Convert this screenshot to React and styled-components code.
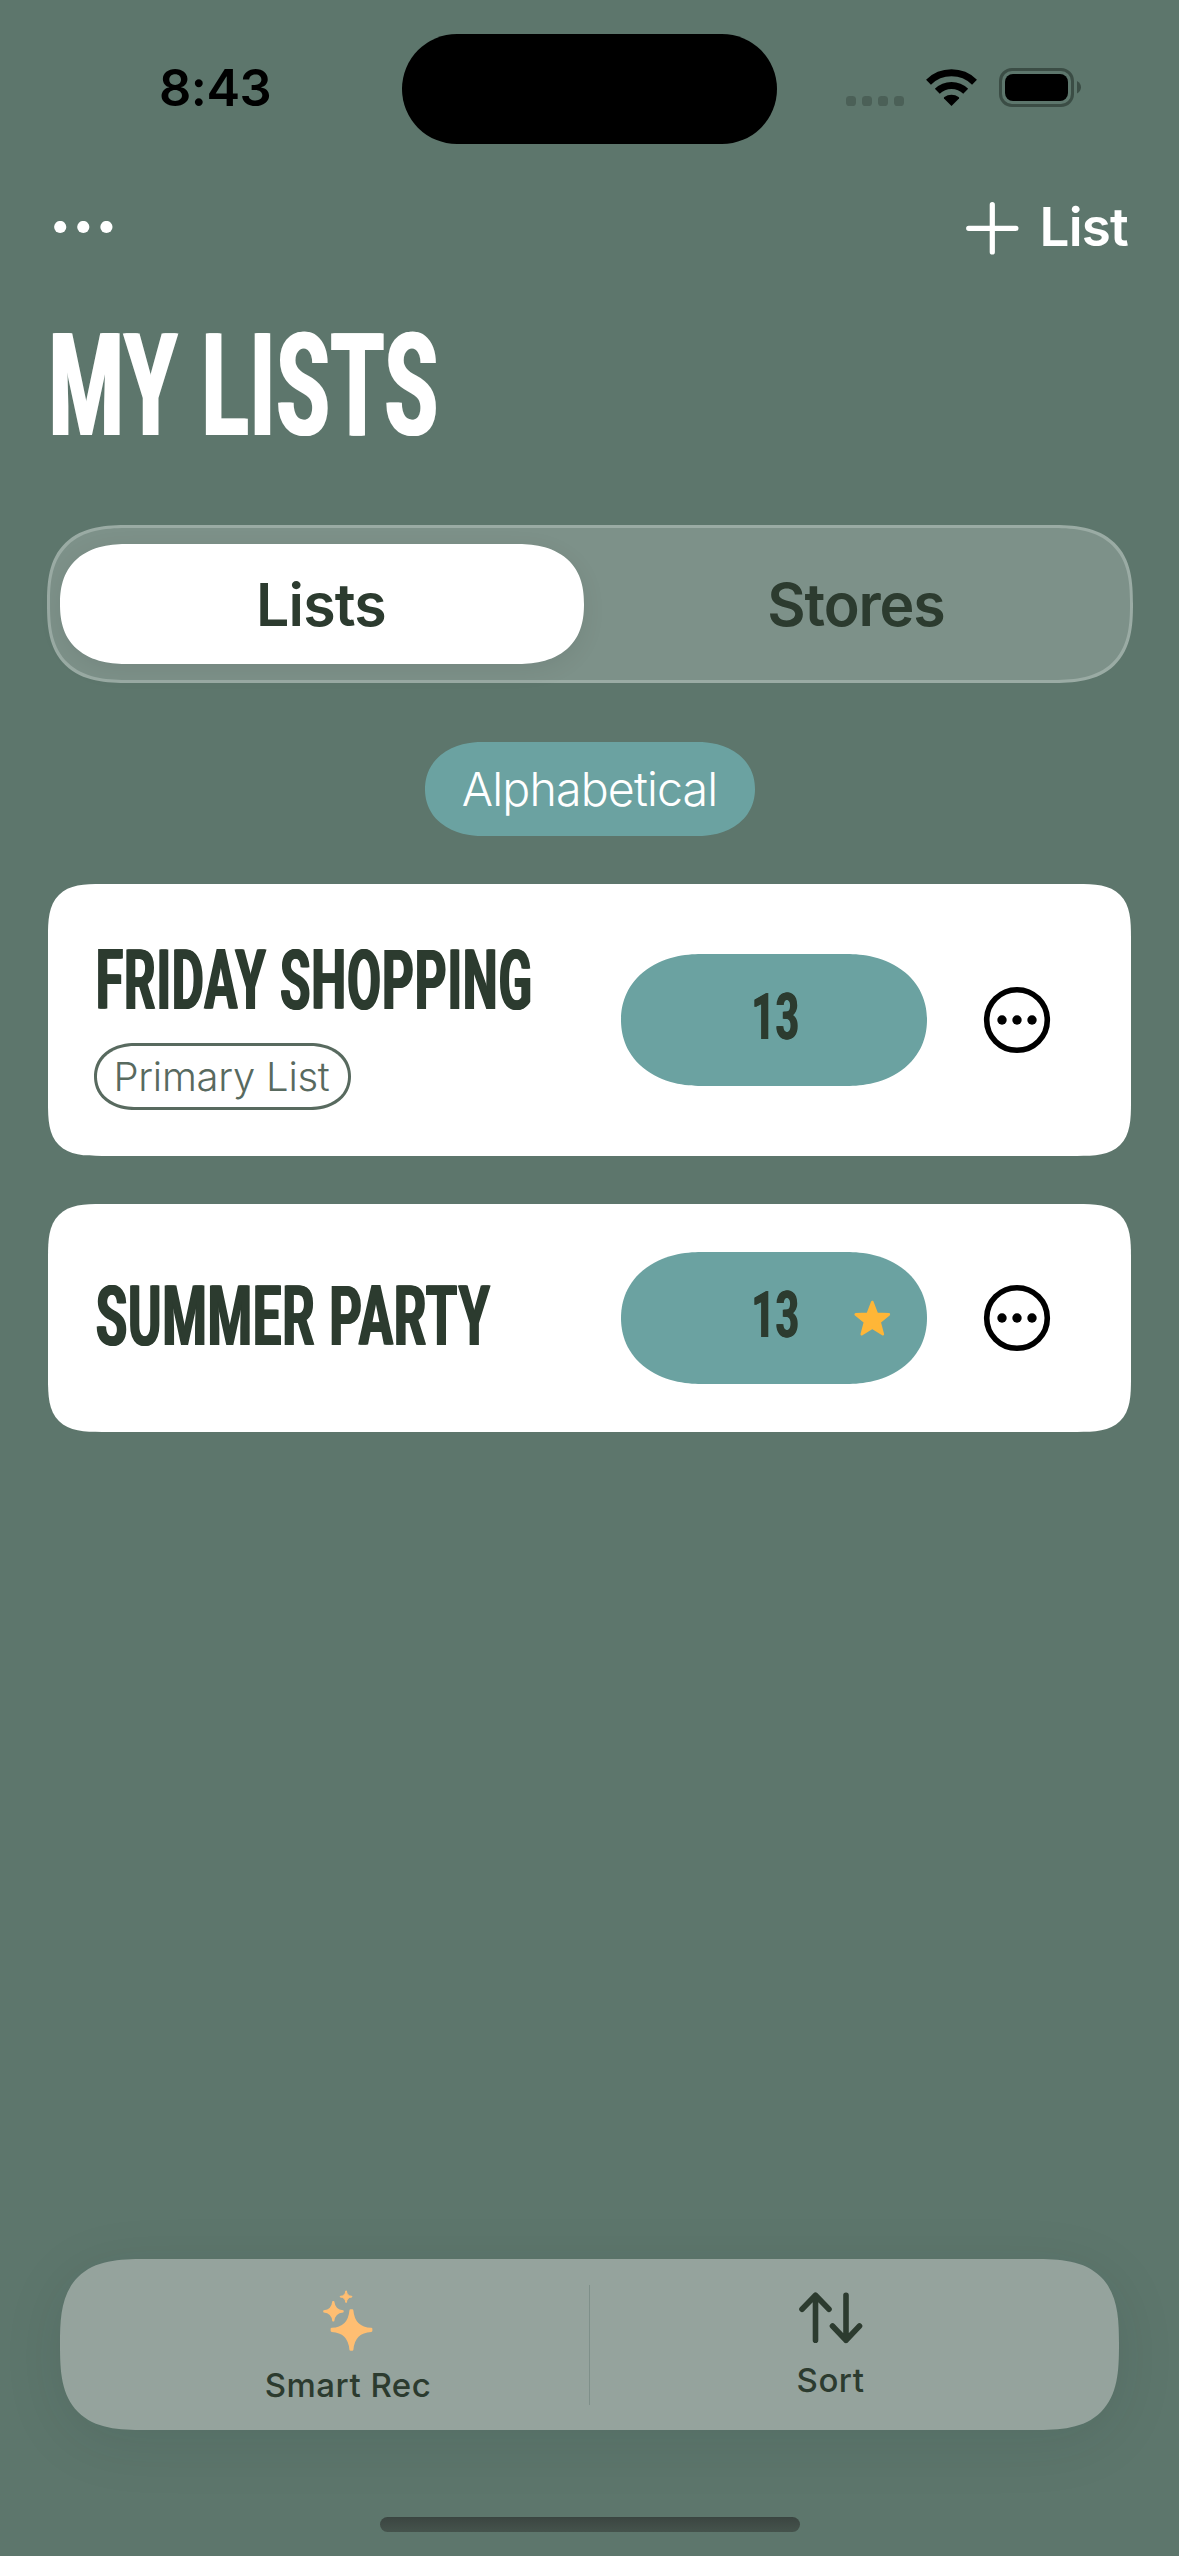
import React from "react";
import styled, { createGlobalStyle } from "styled-components";

const color = {
  page: "#5d766c",
  ink: "#2c3b2f",
  teal: "#6ba2a1",
  outline: "#586a5f",
  bar: "#95a39d",
};

const GlobalStyle = createGlobalStyle`
  *, *::before, *::after { box-sizing: border-box; }
  body { margin: 0; background: ${color.page}; }
  button { margin: 0; padding: 0; border: 0; background: none; color: inherit; font: inherit; }
`;

const Screen = styled.div`
  display: flex;
  flex-direction: column;
  width: 1179px;
  height: 2556px;
  overflow: hidden;
  background: ${color.page};
  color: ${color.ink};
  font-family: Inter, "Liberation Sans", sans-serif;
`;

/* Tall, narrow capitals for titles and numerals; the side shadows thicken the upright strokes */
const Condensed = styled.span`
  display: block;
  width: max-content;
  font-family: Roboto, "Liberation Sans", sans-serif;
  font-weight: 700;
  font-size: ${(p) => p.$size}px;
  line-height: 1;
  letter-spacing: 0.022em;
  white-space: nowrap;
  text-transform: uppercase;
  text-shadow: 0.018em 0 currentColor, -0.018em 0 currentColor;
  transform: scaleX(${(p) => p.$squeeze});
  transform-origin: ${(p) => p.$origin || "left"} center;
`;

const StatusBar = styled.header`
  display: grid;
  grid-template-columns: 402px 375px 402px;
  height: 178px;
  padding-top: 34px;
`;

const Clock = styled.time`
  padding: 28px 0 0 159px;
  color: #000;
  font-size: 50.5px;
  font-weight: 600;
  line-height: 51px;
  letter-spacing: -0.5px;
`;

const Island = styled.div`
  height: 110px;
  border-radius: 55px;
  background: #000;
`;

const StatusIcons = styled.div`
  display: flex;
  align-items: flex-start;
  padding: 34px 0 0 69px;
`;

const NavBar = styled.nav`
  display: flex;
  align-items: center;
  justify-content: space-between;
  height: 100px;
  padding: 0 51px 0 54px;
  color: #fff;
`;

const NavButton = styled.button`
  display: flex;
  align-items: center;
  gap: 21px;
  font-size: 53px;
  font-weight: 600;
  line-height: 60px;
`;

const NavLabel = styled.span`
  padding-bottom: 2px;
  letter-spacing: -0.8px;
`;

const PageTitle = styled.h1`
  height: 247px;
  margin: 0;
  padding: 38px 0 0 49px;
  color: #fff;
`;

const Segments = styled.div`
  display: flex;
  align-items: center;
  width: 1086px;
  height: 158px;
  margin: 0 auto;
  padding: 0 10px;
  border: 3px solid #9aaba4;
  border-radius: 64px;
  background: #7d9189;
  @supports (corner-shape: squircle) {
    border-radius: 82px / 79px;
    corner-shape: superellipse(1.44);
  }
`;

const Segment = styled.button`
  width: 524px;
  height: 120px;
  margin-left: ${(p) => (p.$active ? 0 : 11)}px;
  padding-right: 1px;
  border-radius: 54px;
  background: ${(p) => (p.$active ? "#fff" : "transparent")};
  box-shadow: ${(p) => (p.$active ? "0 6px 24px rgba(0, 0, 0, 0.07)" : "none")};
  font-size: 59px;
  font-weight: 600;
  letter-spacing: ${(p) => p.$spacing}px;
  @supports (corner-shape: squircle) {
    border-radius: 68px / 60px;
    corner-shape: superellipse(1.27);
  }
`;

const SortBadge = styled.div`
  display: flex;
  align-items: center;
  justify-content: center;
  width: 330px;
  height: 94px;
  margin: 59px auto 48px;
  border-radius: 47px;
  background: ${color.teal};
  color: #fff;
  font-size: 46.5px;
  font-weight: 300;
  letter-spacing: -0.85px;
  @supports (corner-shape: squircle) {
    border-radius: 57px / 47px;
    corner-shape: superellipse(1.1);
  }
`;

const Lists = styled.main`
  display: flex;
  flex-direction: column;
  gap: 48px;
  padding: 0 48px;
`;

const Card = styled.article`
  display: flex;
  align-items: center;
  height: ${(p) => p.$height}px;
  padding-left: 48px;
  border-radius: 37px;
  background: #fff;
  @supports (corner-shape: squircle) {
    border-radius: 54px;
    corner-shape: superellipse(1.62);
  }
`;

const CardText = styled.div`
  display: flex;
  flex-direction: column;
  align-items: flex-start;
  width: 525px;
  gap: 28px;
`;

const CardTitle = styled.h2`
  width: 525px;
  height: 84px;
  margin: 0;
  padding: ${(p) => p.$drop}px 0 0;
`;

const PrimaryTag = styled.span`
  display: flex;
  align-items: center;
  justify-content: center;
  width: 257px;
  height: 67px;
  margin-left: -2px;
  padding-right: 2px;
  border: 3px solid ${color.outline};
  border-radius: 34px;
  color: ${color.outline};
  font-size: 40px;
  font-weight: 300;
  letter-spacing: -0.25px;
  @supports (corner-shape: squircle) {
    border-radius: 41px / 33.5px;
    corner-shape: superellipse(1.1);
  }
`;

const Count = styled.div`
  display: grid;
  grid-template-columns: 1fr auto 1fr;
  align-items: center;
  width: 306px;
  height: 132px;
  padding: 0 35px 0 37px;
  border-radius: 66px;
  background: ${color.teal};
  @supports (corner-shape: squircle) {
    border-radius: 80px / 66px;
    corner-shape: superellipse(1.1);
  }
`;

const CountValue = styled.div`
  grid-column: 2;
  padding: 0 0 5px 2px;
`;

const CountStar = styled.div`
  display: flex;
  justify-content: flex-end;
  padding: 1px 1px 0 0;
`;

const MoreButton = styled.button`
  display: flex;
  margin-left: 56px;
`;

const Toolbar = styled.footer`
  display: grid;
  grid-template-columns: 529px 1px 529px;
  align-items: center;
  width: 1059px;
  height: 171px;
  margin: auto auto 87px;
  border-radius: 62px;
  background: ${color.bar};
  box-shadow: 0 12px 60px rgba(0, 40, 40, 0.1);
  @supports (corner-shape: squircle) {
    border-radius: 85px;
    corner-shape: superellipse(1.54);
  }
`;

const ToolButton = styled.button`
  display: flex;
  flex-direction: column;
  align-items: center;
  gap: ${(p) => p.$gap}px;
  padding: ${(p) => p.$pad};
  font-size: 33px;
  font-weight: 500;
  line-height: 40px;
  letter-spacing: 0.5px;
`;

const Divider = styled.div`
  height: 120px;
  background: #7f908a;
`;

const HomeIndicator = styled.div`
  flex: none;
  width: 420px;
  height: 15px;
  margin: 0 auto 24px;
  border-radius: 8px;
  background: linear-gradient(#3b4541, #45534c);
`;

const Signal = () => (
  <svg width="58" height="40" viewBox="0 0 58 40" fill="#4b6057">
    {[0, 16, 32, 48].map((x) => (
      <rect key={x} x={x} y="28" width="10" height="10" rx="3.6" />
    ))}
  </svg>
);

const WifiIcon = styled.svg`
  margin-left: 22px;
`;

const Wifi = () => (
  <WifiIcon width="51" height="40" viewBox="0 0 51 40">
    <g fill="none" stroke="#000" strokeWidth="7">
      <path d="M2.5 14.2 A33 33 0 0 1 48.5 14.2" />
      <path d="M11.3 23.3 A20.3 20.3 0 0 1 39.7 23.3" />
    </g>
    <path d="M25.5 38 L18 30.6 Q17.5 29.8 18.4 29.1 A11.6 11.6 0 0 1 32.6 29.1 Q33.5 29.8 33 30.6 Z" fill="#000" />
  </WifiIcon>
);

const BatteryIcon = styled.svg`
  margin-left: 22px;
`;

const Battery = () => (
  <BatteryIcon width="83" height="40" viewBox="0 0 83 40">
    <rect x="1.5" y="1.5" width="72" height="36" rx="11.5" fill="none" stroke="#3b4d45" strokeWidth="3" />
    <rect x="6" y="6" width="63" height="27" rx="8" fill="#000" />
    <path d="M78 13 Q82 15.4 82 19.3 Q82 23.2 78 25.6 Z" fill="#3b4d45" />
  </BatteryIcon>
);

const Ellipsis = () => (
  <svg width="60" height="14" viewBox="0 0 60 14" fill="#fff">
    <circle cx="6.2" cy="6" r="6.1" />
    <circle cx="29.3" cy="6" r="6.1" />
    <circle cx="52.4" cy="6" r="6.1" />
  </svg>
);

const Plus = () => (
  <svg width="53" height="53" viewBox="0 0 53 53" stroke="#fff" strokeWidth="5.2" strokeLinecap="round">
    <path d="M26.3 2.7 V49.9 M2.7 26.3 H49.9" />
  </svg>
);

const MoreCircle = () => (
  <svg width="68" height="68" viewBox="0 0 68 68">
    <circle cx="34" cy="34" r="30.3" fill="none" stroke="#000" strokeWidth="5.6" />
    <circle cx="19" cy="34" r="4.7" />
    <circle cx="34" cy="34" r="4.7" />
    <circle cx="49" cy="34" r="4.7" />
  </svg>
);

const Star = () => (
  <svg width="37" height="37" viewBox="0 0 37 37">
    <path
      d="M18.3 2 L22.8 13.7 L34.8 14.4 L25.6 22.1 L28.8 34.2 L18.3 27.6 L7.8 34.2 L11 22.1 L1.8 14.4 L13.8 13.7 Z"
      fill="#ffb637"
      stroke="#ffb637"
      strokeWidth="2.6"
      strokeLinejoin="round"
    />
  </svg>
);

const Sparkles = () => (
  <svg width="50" height="62" viewBox="0 0 50 62" fill="#ffbe72" stroke="#ffbe72" strokeLinejoin="round">
    <path strokeWidth="2.4" d="M27.6 20.5 H29.2 Q30.7 38.2 48.2 39 V40.8 Q30.7 41.6 29.2 59.6 H27.6 Q26.1 41.6 8.8 40.8 V39 Q26.1 38.2 27.6 20.5 Z" />
    <path strokeWidth="1.4" d="M9.9 11.8 H10.7 Q11.5 20.2 20 20.9 V21.7 Q11.5 22.4 10.7 30.8 H9.9 Q9.1 22.4 .9 21.7 V20.9 Q9.1 20.2 9.9 11.8 Z" />
    <path strokeWidth="1" d="M22.8 .9 H23.4 Q23.8 6 29 6.4 V6.9 Q23.8 7.3 23.4 12.4 H22.8 Q22.4 7.3 17.1 6.9 V6.4 Q22.4 6 22.8 .9 Z" />
  </svg>
);

const SortArrows = () => (
  <svg width="64" height="52" viewBox="0 0 64 52" fill="none" stroke={color.ink} strokeWidth="5.6" strokeLinecap="round" strokeLinejoin="round">
    <path d="M16.5 48.2 V3.2 M3 17.3 L16.5 3.2 L30 17.3" />
    <path d="M47 3.2 V48.2 M33.5 34 L47 48.2 L60.5 34" />
  </svg>
);

const items = [
  { name: "Friday Shopping", count: 13, primary: true, height: 272, squeeze: 0.595 },
  { name: "Summer Party", count: 13, starred: true, height: 228, squeeze: 0.611 },
];

function ListCard({ item }) {
  return (
    <Card $height={item.height}>
      <CardText>
        <CardTitle $drop={item.primary ? 9 : 0}>
          <Condensed $size={82.5} $squeeze={item.squeeze}>{item.name}</Condensed>
        </CardTitle>
        {item.primary && <PrimaryTag>Primary List</PrimaryTag>}
      </CardText>
      <Count>
        <CountValue>
          <Condensed $size={65} $squeeze={0.62} $origin="center">{item.count}</Condensed>
        </CountValue>
        {item.starred && <CountStar><Star /></CountStar>}
      </Count>
      <MoreButton aria-label="List options"><MoreCircle /></MoreButton>
    </Card>
  );
}

export default function App() {
  return (
    <Screen>
      <GlobalStyle />
      <StatusBar>
        <Clock>8:43</Clock>
        <Island />
        <StatusIcons>
          <Signal />
          <Wifi />
          <Battery />
        </StatusIcons>
      </StatusBar>
      <NavBar>
        <NavButton aria-label="More"><Ellipsis /></NavButton>
        <NavButton><Plus /><NavLabel>List</NavLabel></NavButton>
      </NavBar>
      <PageTitle>
        <Condensed $size={142} $squeeze={0.6}>My Lists</Condensed>
      </PageTitle>
      <Segments>
        <Segment $active $spacing={-0.8}>Lists</Segment>
        <Segment $spacing={-1.1}>Stores</Segment>
      </Segments>
      <SortBadge>Alphabetical</SortBadge>
      <Lists>
        {items.map((item) => <ListCard key={item.name} item={item} />)}
      </Lists>
      <Toolbar>
        <ToolButton $gap={13} $pad="5px 0 0 47px"><Sparkles />Smart Rec</ToolButton>
        <Divider />
        <ToolButton $gap={16} $pad="2px 48px 0 0"><SortArrows />Sort</ToolButton>
      </Toolbar>
      <HomeIndicator />
    </Screen>
  );
}
